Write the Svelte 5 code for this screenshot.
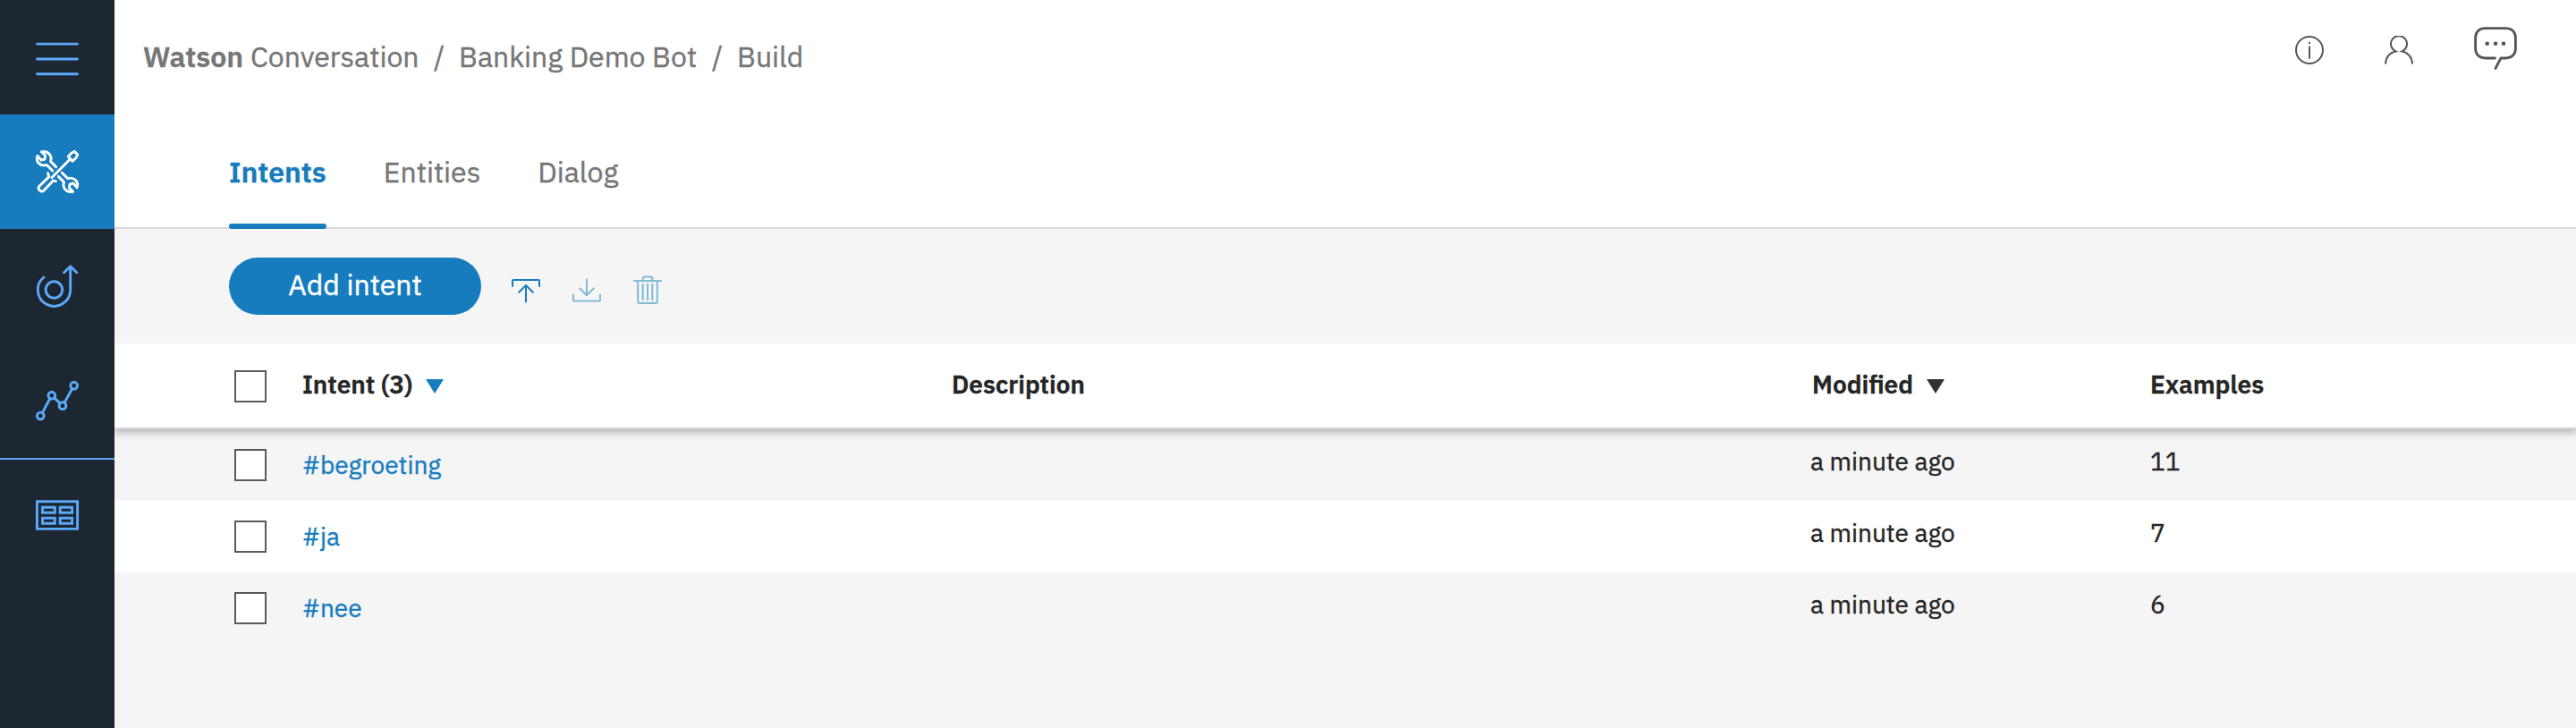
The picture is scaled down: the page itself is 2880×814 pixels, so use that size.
<script>
  const rows = [
    { name: '#begroeting', modified: 'a minute ago', examples: 11 },
    { name: '#ja', modified: 'a minute ago', examples: 7 },
    { name: '#nee', modified: 'a minute ago', examples: 6 }
  ];
</script>

<div class="app">
  <nav class="rail">
    <button class="item" aria-label="Menu">
      <svg viewBox="0 0 48 48"><path d="M1.500 9.100h45M1.500 26h45M1.500 42.800h45" /></svg>
    </button>
    <button class="item active" aria-label="Build">
      <svg viewBox="0 0 48 48">
        <path d="M22.700 18.600l-6.200-6.200C18.700 6.200 14 .4 6.400 1.700L10.600 6l-.7 4.200-3.900.8-4-4.800C-.6 13 5 18.400 12.400 16.400l6.400 6.500" />
        <path d="M25.300 29.400l6.200 6.200C29.300 41.800 34 47.600 41.600 46.300L37.400 42l.7-4.200 3.900-.8 4 4.800C48.600 35 43 29.600 35.600 31.600l-6.400-6.500" />
        <path d="M18 30.600L38.800 9.600M36.300 7l3.800-4 3.400-1.600 3.200 3.300-1.500 3.600-4.100 3.900zM13.500 25.600l1.300 4L3.800 40.200a3.600 3.600 0 0 0 5 5l10.600-11.300 3 .8" />
      </svg>
    </button>
    <button class="item" aria-label="Deploy">
      <svg viewBox="0 0 48 48"><circle cx="20.4" cy="28" r="9.300" /><path d="M9 14A18.200 18.200 0 1 0 38.700 28V2M31.600 8.800l7.100-7 7.100 7" /></svg>
    </button>
    <button class="item" aria-label="Improve">
      <svg viewBox="0 0 48 48">
        <circle cx="5.3" cy="41" r="3.900" /><circle cx="17.8" cy="18.2" r="3.900" /><circle cx="30" cy="29.7" r="3.900" /><circle cx="42.7" cy="7.2" r="3.900" />
        <path d="M7.300 37.500l8.500-15.700M20.800 20.900l6.300 6M32 26.200l8.700-15.500" />
      </svg>
    </button>
    <button class="item ruled" aria-label="Workspaces">
      <svg viewBox="0 0 48 48" class="sharp"><path d="M1.400 8.700h45.200v30.700H1.400zM7.500 15.300h13.800v6H7.500zM27.200 15.300h13.400v6H27.200zM7.500 27.300h13.800v6H7.500zM27.200 27.300h13.400v6H27.200z" /></svg>
    </button>
  </nav>

  <main>
    <header>
      <div class="crumbs">
        <b>Watson</b><span class="product">Conversation</span><i>/</i><span class="bot">Banking Demo Bot</span><i>/</i><span>Build</span>
      </div>
      <div class="actions">
        <svg class="small" viewBox="0 0 32 32"><circle cx="16" cy="16" r="15" /><path d="M16 11.800v14" /><circle class="dot" cx="16" cy="8" r="1.200" /></svg>
        <svg class="small" viewBox="0 0 32 32"><path d="M1 31.500C1.300 23.900 5.700 18.500 12.400 17.400A9 9 0 1 1 19.600 17.400C26.300 18.500 30.700 23.900 31 31.500" /></svg>
        <svg class="chat" viewBox="0 0 48 48"><path d="M23.500 35H12.500C5.800 35 1.600 30.800 1.600 24.500V12C1.600 5.800 5.800 1.600 12.500 1.600h23C42.200 1.600 46.400 5.800 46.400 12v12.500C46.400 30.800 42.200 35 35.500 35H30l-6 11.500" /><circle class="dot" cx="14.700" cy="18.700" r="2.300" /><circle class="dot" cx="24" cy="18.700" r="2.300" /><circle class="dot" cx="33" cy="18.700" r="2.300" /></svg>
      </div>
    </header>

    <div class="tabs">
      <button class="tab current">Intents</button>
      <button class="tab">Entities</button>
      <button class="tab">Dialog</button>
    </div>

    <div class="toolbar">
      <button class="add">Add intent</button>
      <svg viewBox="0 0 32 32"><path d="M1 12V5.900Q1 5 1.900 5H30.100Q31 5 31 5.900V12M16 29.500V11M8.200 18.700L16 10.900l7.800 7.800" /></svg>
      <svg class="off" viewBox="0 0 32 32"><path d="M1 21.500v6.100Q1 28.500 1.900 28.500H30.100Q31 28.500 31 27.600V21.500M16 4.200v18M8.200 14.400L16 22.200l7.800-7.800" /></svg>
      <svg class="off" viewBox="0 0 32 32"><path d="M.9 6h30.200M10.700 6V3q0-1.600 1.600-1.600h7.400q1.600 0 1.600 1.600v3M5.200 6v23q0 2 2 2h17.600q2 0 2-2V6M10.700 9.700v17.500M16 9.700v17.500M21.300 9.700v17.500" /></svg>
    </div>

    <section>
      <div class="row head">
        <span class="box"></span>
        <span class="title">Intent (3)<svg class="tri" viewBox="0 0 20 16"><path d="M0 0h20L10 16z" /></svg></span>
        <span class="title">Description</span>
        <span class="title">Modified<svg class="tri dark" viewBox="0 0 20 16"><path d="M0 0h20L10 16z" /></svg></span>
        <span class="title">Examples</span>
      </div>
      {#each rows as row}
        <div class="row line">
          <span class="box"></span>
          <a href="#intent">{row.name}</a>
          <span></span>
          <span class="modified">{row.modified}</span>
          <span>{row.examples}</span>
        </div>
      {/each}
    </section>
  </main>
</div>

<style>
  :global(body) { background: #f5f5f5; }
  .app { display: flex; height: 814px; font-family: "IBM Plex Sans", Roboto, sans-serif; line-height: 40px; overflow: hidden; -webkit-text-stroke: .4px currentColor; }
  button { border: 0; padding: 0; margin: 0; font: inherit; background: none; color: inherit; }
  svg { display: block; fill: none; stroke: currentColor; stroke-linecap: round; stroke-linejoin: round; }

  .rail { width: 128px; flex: none; background: #1c2732; color: #5aaafa; }
  .item { display: flex; align-items: center; justify-content: center; width: 128px; height: 128px; box-sizing: border-box; }
  .item svg { width: 48px; height: 48px; stroke-width: 2.9; overflow: visible; }
  .item.active { background: #167cbe; color: #fff; }
  .item.ruled { box-shadow: inset 0 2px #5aaafa; }
  .item .sharp { stroke-linejoin: miter; }

  main { flex: 1; min-width: 0; color: #252525; }
  header { display: flex; justify-content: space-between; height: 128px; padding: 0 66px 0 32px; box-sizing: border-box; background: #fff; }
  .crumbs { display: flex; padding-top: 43px; color: #777677; font-size: 32px; }
  .crumbs b { width: 120px; font-weight: 600; }
  .crumbs i { width: 28px; font-style: normal; }
  .product { width: 205px; }
  .bot { width: 283px; }
  .actions { display: flex; gap: 68px; color: #565656; }
  .small { width: 32px; height: 32px; margin-top: 40px; stroke-width: 2; }
  .small path { stroke-linecap: butt; stroke-linejoin: miter; }
  .chat { width: 48px; height: 48px; margin-top: 30px; stroke-width: 2.8; }
  .dot { fill: currentColor; stroke: none; }

  .tabs { display: flex; gap: 64px; height: 128px; padding-left: 128px; box-sizing: border-box; background: linear-gradient(#d8d8d8, #d8d8d8) bottom / 100% 2px no-repeat #fff; color: #777677; font-size: 32px; }
  .tab { position: relative; height: 128px; padding: 44px 0; box-sizing: border-box; }
  .current { color: #167cbe; font-weight: 600; }
  .current::after { content: ""; position: absolute; inset: auto 0 0; height: 6px; border-radius: 3px; background: #167cbe; }

  .toolbar { display: flex; align-items: center; gap: 36px; height: 128px; padding-left: 128px; box-sizing: border-box; color: #167cbe; }
  .toolbar svg { width: 32px; height: 32px; margin-top: 8px; stroke-width: 2; }
  .add { width: 282px; height: 64px; margin-right: -2px; padding-bottom: 4px; border-radius: 32px; background: #167cbe; color: #fff; font-size: 32px; }
  .toolbar .off { opacity: .5; }

  .row { display: grid; grid-template-columns: 76px 726px 962px 378px 1fr; padding-left: 134px; box-sizing: border-box; font-size: 28px; }
  .box { width: 36px; height: 36px; box-sizing: border-box; border: 2px solid #5a5a5a; background: #fff; }
  .head { position: relative; height: 96px; padding-top: 26px; border-bottom: 2px solid #d4d4d4; background: #fff; box-shadow: 0 4px 8px rgba(0, 0, 0, .26); clip-path: inset(0 0 -20px 0); font-weight: 600; }
  .head .box { margin-top: 4px; }
  .title { display: flex; align-items: flex-start; height: 40px; }
  .tri { width: 20px; height: 16px; margin: 14px 0 0 14px; fill: #167cbe; stroke: none; }
  .dark { margin-left: 15px; fill: #323232; }
  .line { height: 80px; padding-top: 16px; }
  .line:nth-child(odd) { background: #fff; }
  .line .box { margin-top: 6px; }
  .line a { padding-top: 4px; color: #167cbe; text-decoration: none; }
  .modified { margin-left: -2px; }
</style>
